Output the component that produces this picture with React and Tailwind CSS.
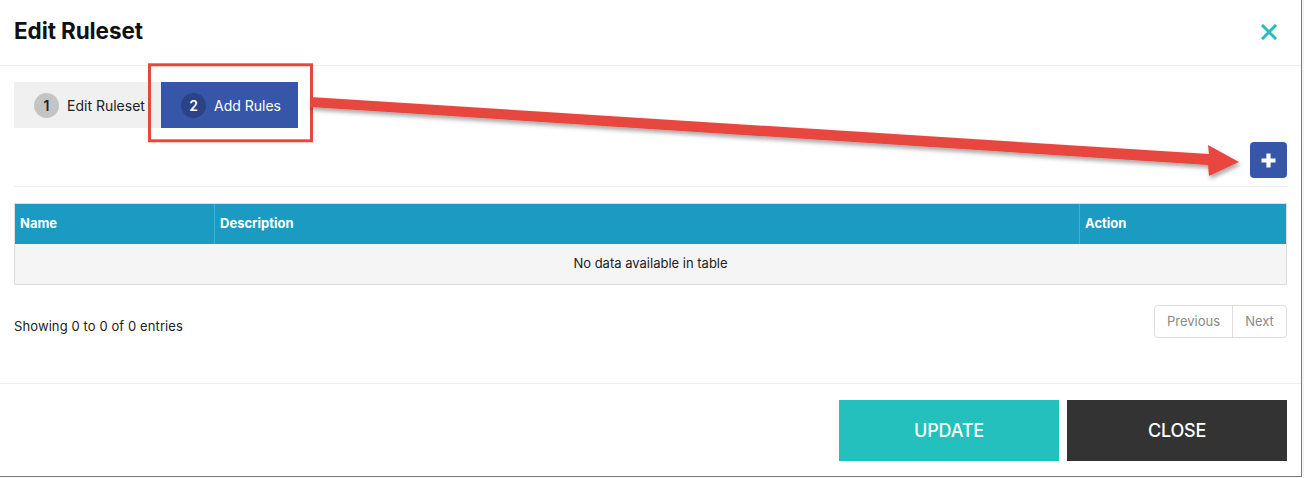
import React from "react";

export default function App() {
  return (
    <div className="relative w-[1304px] h-[478px] bg-[#f4f4f4]" style={{ fontFamily: "Inter, 'Open Sans', sans-serif" }}>
      <div className="w-[1302px] h-[477px] bg-white border-r border-b border-[#7d7d7d] flex flex-col">
        {/* header */}
        <div className="h-[66px] shrink-0 flex items-center justify-between pl-[14px] pr-[24px] border-b border-[#eeeeee]">
          <h1 className="text-[22.5px] font-bold text-[#111] tracking-[-0.1px] mt-[-3px]">Edit Ruleset</h1>
          <svg width="16" height="16" viewBox="0 0 16 16" className="mt-[-2px]">
            <path d="M2 2 L14 14 M14 2 L2 14" stroke="#22c0b9" strokeWidth="3" strokeLinecap="square" />
          </svg>
        </div>
        {/* body */}
        <div className="px-[14px] flex flex-col">
          <div className="mt-[16px] flex h-[46px]">
            <div className="w-[147px] bg-[#f0f0f0] flex items-center pl-[20px] gap-[8px]">
              <span className="w-[25px] h-[25px] rounded-full bg-[#c4c4c4] flex items-center justify-center text-[14px] font-semibold text-[#222]">1</span>
              <span className="text-[14px] text-[#222] whitespace-nowrap">Edit Ruleset</span>
            </div>
            <div className="w-[137px] bg-[#3656a7] flex items-center pl-[20px] gap-[8px]">
              <span className="w-[25px] h-[25px] rounded-full bg-[#2c4287] flex items-center justify-center text-[14px] font-semibold text-white">2</span>
              <span className="text-[14px] text-white whitespace-nowrap">Add Rules</span>
            </div>
          </div>
          <div className="flex justify-end mt-[14px]">
            <button className="w-[37px] h-[36px] rounded-[4px] bg-[#3656a7] flex items-center justify-center">
              <svg width="15" height="15" viewBox="0 0 15 15">
                <path d="M7.5 0.5 V14.5 M0.5 7.5 H14.5" stroke="#fff" strokeWidth="4.2" />
              </svg>
            </button>
          </div>
          <div className="mt-[8px] border-t border-[#eeeeee]" />
          {/* table */}
          <div className="mt-[16px] border border-[#dddddd]">
            <div className="h-[40px] bg-[#1b9bc1] flex text-white text-[13px] font-bold">
              <div className="w-[200px] flex items-center pl-[5px] border-r border-[#3cb3d6]">Name</div>
              <div className="w-[865px] flex items-center pl-[5px] border-r border-[#3cb3d6]">Description</div>
              <div className="flex-1 flex items-center pl-[5px]">Action</div>
            </div>
            <div className="h-[40px] bg-[#f5f5f5] flex items-center justify-center text-[13px] text-[#222]">
              No data available in table
            </div>
          </div>
          <div className="mt-[20px] flex items-center justify-between h-[33px]">
            <span className="text-[13px] text-[#222] mt-[10px] tracking-[0.1px]">Showing 0 to 0 of 0 entries</span>
            <div className="flex h-[33px] border border-[#dedede] rounded-[4px] text-[13px] text-[#8a8a8a]">
              <span className="w-[78px] flex items-center justify-center border-r border-[#dedede]">Previous</span>
              <span className="w-[53px] flex items-center justify-center">Next</span>
            </div>
          </div>
        </div>
        {/* footer */}
        <div className="mt-[45px] border-t border-[#eeeeee] flex justify-end gap-[8px] pr-[14px] pt-[16px]">
          <button className="w-[220px] h-[61px] bg-[#23c0bd] text-white text-[18px] font-medium tracking-[-0.2px]">UPDATE</button>
          <button className="w-[220px] h-[61px] bg-[#333333] text-white text-[18px] font-medium tracking-[-0.2px]">CLOSE</button>
        </div>
      </div>
      {/* annotation overlay */}
      <svg className="absolute left-0 top-0 pointer-events-none" width="1304" height="478" viewBox="0 0 1304 478">
        <defs>
          <filter id="sh" x="-5%" y="-50%" width="110%" height="200%">
            <feDropShadow dx="1.5" dy="3" stdDeviation="2" floodColor="#000" floodOpacity="0.35" />
          </filter>
        </defs>
        <rect x="149.5" y="64.8" width="162" height="76" fill="none" stroke="#e8473f" strokeWidth="3" />
        <polygon
          filter="url(#sh)"
          fill="#e8473f"
          points="310,97 1209,154 1208,145 1239,162 1209,176 1208,165 310,107"
        />
      </svg>
    </div>
  );
}
